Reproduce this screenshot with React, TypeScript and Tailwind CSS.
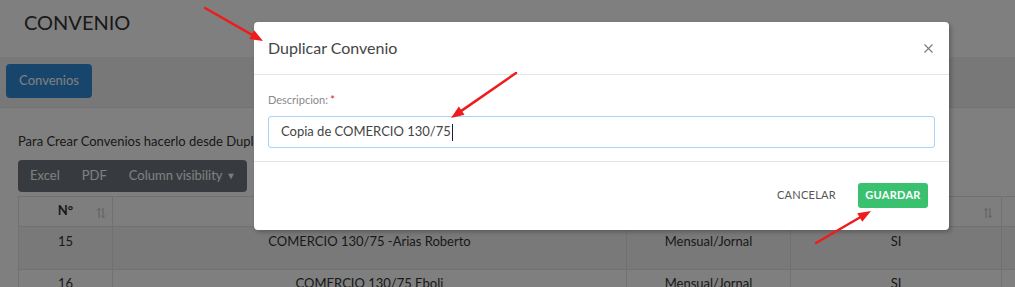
import React from 'react';
import { X } from 'lucide-react';

const font = { fontFamily: 'Lato, "Noto Sans", sans-serif' };

function SortIcon() {
  return (
    <svg width="10" height="12" viewBox="0 0 10 12" className="text-[#bcbcbc]">
      <path d="M3 11V1.5M1 3.5L3 1.5L5 3.5" fill="none" stroke="currentColor" strokeWidth="1" />
      <path d="M7 1V10.5M5 8.5L7 10.5L9 8.5" fill="none" stroke="currentColor" strokeWidth="1" />
    </svg>
  );
}

function Arrow({ x1, y1, x2, y2 }: { x1: number; y1: number; x2: number; y2: number }) {
  const a = Math.atan2(y2 - y1, x2 - x1);
  const len = 13;
  const w = 5;
  const bx = x2 - Math.cos(a) * len;
  const by = y2 - Math.sin(a) * len;
  const px = -Math.sin(a) * w;
  const py = Math.cos(a) * w;
  return (
    <g>
      <line x1={x1} y1={y1} x2={bx} y2={by} stroke="#ee1c1c" strokeWidth="2.5" strokeLinecap="round" />
      <polygon points={`${x2},${y2} ${bx + px},${by + py} ${bx - px},${by - py}`} fill="#ee1c1c" />
    </g>
  );
}

export default function App() {
  return (
    <div className="relative w-[1015px] h-[287px] overflow-hidden bg-[#f0f0f0]" style={font}>
      {/* page behind the modal */}
      <div className="h-[57px] bg-white px-6 pt-[9px]">
        <h1 className="text-[20px] leading-[26px] text-[#333]">CONVENIO</h1>
      </div>
      <div className="h-[50px] pt-[7px] px-[6px]">
        <button className="h-[34px] w-[86px] rounded bg-[#2f8ad8] text-white text-[13px]">Convenios</button>
      </div>
      <div className="bg-white h-[180px] px-[18px] pt-[24px] border-t border-[#e4e4e4]">
        <p className="text-[13px] text-[#333]">Para Crear Convenios hacerlo desde Duplicar en la lista</p>
        <div className="mt-[8px] inline-flex h-[32px] items-center rounded bg-[#6f777f] text-white text-[13px] px-3 gap-[22px]">
          <span>Excel</span>
          <span>PDF</span>
          <span className="flex items-center gap-1">Column visibility<span className="text-[9px]">▼</span></span>
        </div>
        <table className="mt-[4px] w-[1030px] border-collapse text-[13px] text-[#333]">
          <thead>
            <tr className="h-[30px] bg-[#fdfdfd]">
              <th className="w-[94px] border border-[#e2e2e2] font-bold relative">
                N°<span className="absolute right-[6px] top-[10px]"><SortIcon /></span>
              </th>
              <th className="w-[514px] border border-[#e2e2e2]"></th>
              <th className="w-[164px] border border-[#e2e2e2]"></th>
              <th className="w-[211px] border border-[#e2e2e2] relative">
                <span className="absolute right-[8px] top-[10px]"><SortIcon /></span>
              </th>
              <th className="border border-[#e2e2e2]"></th>
            </tr>
          </thead>
          <tbody>
            <tr className="h-[43px] bg-[#f2f2f2] align-top">
              <td className="border border-[#e2e2e2] text-center pt-[5px]">15</td>
              <td className="border border-[#e2e2e2] text-center pt-[5px]">COMERCIO 130/75 -Arias Roberto</td>
              <td className="border border-[#e2e2e2] text-center pt-[5px]">Mensual/Jornal</td>
              <td className="border border-[#e2e2e2] text-center pt-[5px]">SI</td>
              <td className="border border-[#e2e2e2]"></td>
            </tr>
            <tr className="h-[43px] bg-white align-top">
              <td className="border border-[#e2e2e2] text-center pt-[4px]">16</td>
              <td className="border border-[#e2e2e2] text-center pt-[4px]">COMERCIO 130/75 Eboli</td>
              <td className="border border-[#e2e2e2] text-center pt-[4px]">Mensual/Jornal</td>
              <td className="border border-[#e2e2e2] text-center pt-[4px]">SI</td>
              <td className="border border-[#e2e2e2]"></td>
            </tr>
          </tbody>
        </table>
      </div>

      {/* backdrop */}
      <div className="absolute inset-0 bg-black/50" />

      {/* modal */}
      <div className="absolute left-[254px] top-[22px] w-[695px] h-[208px] bg-white rounded-[4px] shadow-[2px_2px_4px_rgba(0,0,0,0.25)] flex flex-col">
        <div className="h-[53px] flex items-center justify-between px-[14px] border-b border-[#e5e5e5]">
          <h2 className="text-[16px] text-[#454545]">Duplicar Convenio</h2>
          <X className="w-[15px] h-[15px] text-[#7a7a7a] -mr-[1px]" strokeWidth={1.8} />
        </div>
        <div className="h-[87px] px-[14px] pt-[19px] border-b border-[#e5e5e5]">
          <label className="block text-[11px] text-[#8a8a8a] leading-none">
            Descripcion:<span className="text-[#e52b2b] text-[12px] ml-[2px]">*</span>
          </label>
          <div className="mt-[10px] h-[32px] w-[667px] rounded-[3px] border border-[#a9d3f7] flex items-center pl-[12px] text-[13px] text-[#444]">
            <span>Copia de COMERCIO 130/75</span>
            <span className="inline-block w-[1px] h-[17px] bg-[#222] ml-[1px]" />
          </div>
        </div>
        <div className="flex-1 flex items-start justify-end gap-[22px] pr-[21px] pt-[21px]">
          <button className="h-[25px] text-[11px] text-[#555] tracking-wide">CANCELAR</button>
          <button className="h-[25px] w-[70px] rounded-[3px] bg-[#3ac16f] text-white text-[11px] font-bold tracking-wide">GUARDAR</button>
        </div>
      </div>

      {/* annotations */}
      <svg className="absolute inset-0 pointer-events-none" width="1015" height="287">
        <Arrow x1={205} y1={8} x2={263} y2={41} />
        <Arrow x1={516} y1={73} x2={451} y2={118} />
        <Arrow x1={816} y1={243} x2={871} y2={211} />
      </svg>
    </div>
  );
}
